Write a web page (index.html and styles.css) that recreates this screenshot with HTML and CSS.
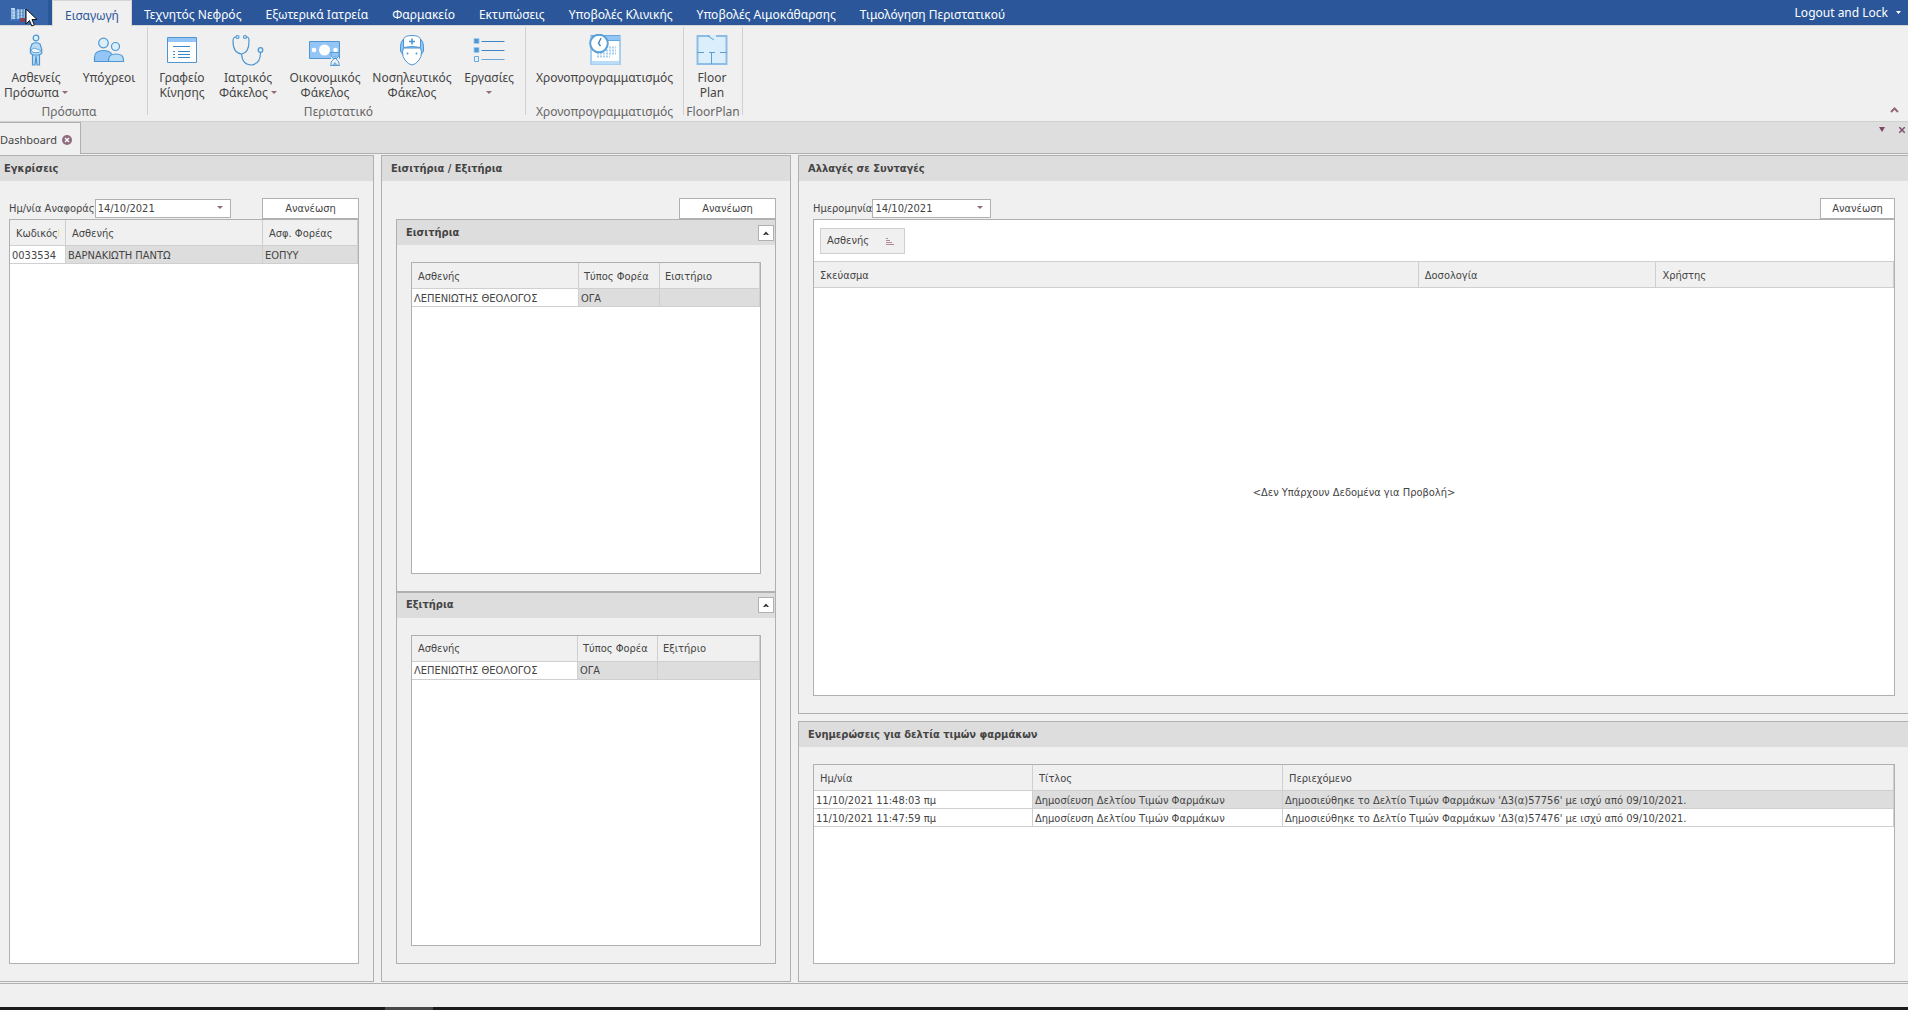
FILE: index.html
```
<!DOCTYPE html>
<html lang="el">
<head>
<meta charset="utf-8">
<title>Dashboard</title>
<link rel="stylesheet" href="styles.css">
</head>
<body>
<div class="app">
  <header class="titlebar">
    <button class="app-button" type="button" aria-label="Μενού εφαρμογής">
      <svg width="20" height="18" viewBox="0 0 20 18">
        <path d="M2 2h4v12H2z" fill="#b9dcf0"/><path d="M6 4h3v10H6z" fill="#5d87c0"/>
        <path d="M8 3h8v10H8z" fill="#8cbbe4"/>
        <path d="M9 5h6M9 8h6M9 11h6" stroke="#dcecf8"/><path d="M11 3v10M14 3v10" stroke="#3763a9"/>
        <path d="M3 3v10M2 5h4M2 8h4M2 11h4" stroke="#7ba9d6"/>
        <path d="M11 12h5v4h-5z" fill="#8a4058"/><path d="M1 14h9" stroke="#3f74bd" stroke-width="2"/>
      </svg>
      <svg class="cursor" width="13" height="20" viewBox="0 0 13 20"><path d="M1 1v15l3.500-3.500 2.300 5.500 2.600-1-2.400-5.500H12z" fill="#fff" stroke="#111"/></svg>
    </button>
    <nav class="tabs">
      <button class="tab tab-active" type="button">Εισαγωγή</button>
      <button class="tab" type="button">Τεχνητός Νεφρός</button>
      <button class="tab" type="button">Εξωτερικά Ιατρεία</button>
      <button class="tab" type="button">Φαρμακείο</button>
      <button class="tab" type="button">Εκτυπώσεις</button>
      <button class="tab" type="button">Υποβολές Κλινικής</button>
      <button class="tab" type="button">Υποβολές Αιμοκάθαρσης</button>
      <button class="tab" type="button">Τιμολόγηση Περιστατικού</button>
    </nav>
    <button class="logout" type="button">Logout and Lock
      <svg width="5" height="3" viewBox="0 0 5 3"><path d="M0 0h5L2.500 3z" fill="#fff"/></svg>
    </button>
  </header>

  <div class="ribbon">
    <section class="rgroup rgroup-people">
      <div class="ritems">
        <button class="ritem w-72" type="button">
          <svg width="32" height="32" viewBox="0 0 32 32" stroke="#4f96d0" stroke-width="1.200" fill="#b8dcf8">
            <path d="M12.500 20v11h2.500l1-9 1 9h2.500V20"/>
            <path d="M12 10q4-2.500 8 0l1.700 5v4.500l-2.500 1.500h-6.500l-2.300-2v-4.500z"/>
            <path d="M11 16l3-2 7 2.500-2 2-6 0z" fill="#f0f8ff" stroke-width=".8"/>
            <circle cx="16" cy="4" r="2.800" fill="#daeefb"/>
          </svg>
          <span>Ασθενείς<br>Πρόσωπα <i class="drop"></i></span>
        </button>
        <button class="ritem w-74" type="button">
          <svg width="32" height="32" viewBox="0 0 32 32" stroke="#4f96d0" stroke-width="1.200">
            <path d="M1.500 27.500v-4q0-7 9-7t9 7v4z" fill="#93c6f7"/>
            <path d="M15.500 27.500v-1.500q0-6 7.500-6t7.500 6v1.500z" fill="#b5dcf9"/>
            <circle cx="10.500" cy="9" r="4.800" fill="#daeefb"/><circle cx="22.500" cy="12.500" r="4" fill="#daeefb"/>
          </svg>
          <span>Υπόχρεοι</span>
        </button>
      </div>
      <div class="rcaption">Πρόσωπα</div>
    </section>
    <section class="rgroup rgroup-case">
      <div class="ritems">
        <button class="ritem w-60" type="button">
          <svg width="32" height="32" viewBox="0 0 32 32">
            <path d="M1.500 3.500h29v25h-29z" fill="#fff" stroke="#4f96d0"/><path d="M2 4h28v4H2z" fill="#93c6f7"/>
            <path d="M7 12.500h17M12 17.500h12M12 20.500h12M12 23.500h12" stroke="#3d86c6"/>
            <path d="M7 17.500h3M7 20.500h3M7 23.500h3" stroke="#3d86c6" stroke-dasharray="2 1"/>
          </svg>
          <span>Γραφείο<br>Κίνησης</span>
        </button>
        <button class="ritem w-72" type="button">
          <svg width="32" height="32" viewBox="0 0 32 32" stroke="#4f96d0" stroke-width="1.200" fill="none">
            <path d="M4 3q-3 0-3 4 0 12 8.500 13Q17 19 17 7q0-4-2-4"/>
            <path d="M9.500 20q1 11 10 11 9-1 9-12.500"/>
            <circle cx="5.500" cy="3" r="1.500" fill="#daeefb"/><circle cx="13" cy="3" r="1.500" fill="#daeefb"/><circle cx="28.500" cy="16" r="2.300" fill="#daeefb"/>
          </svg>
          <span>Ιατρικός<br>Φάκελος <i class="drop"></i></span>
        </button>
        <button class="ritem w-82" type="button">
          <svg width="32" height="32" viewBox="0 0 32 32">
            <path d="M.500 7.500h30v17h-30z" fill="#93c6f7" stroke="#4f96d0"/>
            <circle cx="15.500" cy="16" r="5.500" fill="#fff"/><circle cx="5" cy="16" r="2.300" fill="#fff"/><circle cx="26.500" cy="16" r="2.300" fill="#fff"/>
            <path d="M21 18.500h10M21 31.500h10M22 19v2q0 2 3 4-3 2-3 4v2M30 19v2q0 2-3 4 3 2 3 4v2" fill="#e3f2fd" stroke="#5c9fd3"/>
            <path d="M24 22h4l-2 2zM23 31l3-3 3 3z" fill="#7cb8ec"/>
          </svg>
          <span>Οικονομικός<br>Φάκελος</span>
        </button>
        <button class="ritem w-92" type="button">
          <svg width="32" height="32" viewBox="0 0 32 32" stroke="#4f96d0">
            <path d="M7 5.500Q4.500 8 4.500 13v4l2.500 4h18l2.500-4v-4Q27.500 8 25 5.500z" fill="#93c6f7"/>
            <path d="M7.500 14l-1 4q0 5 2.500 8 3 4.500 7 5 4-.5 7-5 2.500-3 2.500-8l-1-4z" fill="#fff"/>
            <path d="M7.500 13.500V5Q9 1.500 16 1.500T24.500 5v8.500q-8.500-2-17 0z" fill="#fff"/>
            <path d="M13 7.500h6M16 4.500v6" stroke-width="1.600"/>
            <circle cx="11.500" cy="19.500" r="1" fill="#4f96d0" stroke="none"/><circle cx="20.500" cy="19.500" r="1" fill="#4f96d0" stroke="none"/>
          </svg>
          <span>Νοσηλευτικός<br>Φάκελος</span>
        </button>
        <button class="ritem w-62" type="button">
          <svg width="32" height="32" viewBox="0 0 32 32">
            <path d="M1 4.500h5v5H1zM1 13.500h5v5H1z" fill="#4f96d0" stroke="#9ccaf0"/>
            <path d="M1.500 22.500h4v5h-4z" fill="#e6f3fd" stroke="#6aa9dc"/>
            <path d="M8.500 7.500h23M8.500 16.500h23" stroke="#3d86c6"/><path d="M8.500 25.500h23" stroke="#6aa5d8"/>
          </svg>
          <span>Εργασίες<br><i class="drop"></i></span>
        </button>
      </div>
      <div class="rcaption">Περιστατικό</div>
    </section>
    <section class="rgroup rgroup-plan">
      <div class="ritems">
        <button class="ritem w-157" type="button">
          <svg width="32" height="32" viewBox="0 0 32 32">
            <path d="M2 2h29v28H2z" fill="#fff" stroke="#a8cff0" stroke-width="2"/><path d="M2 2h29v4H2z" fill="#93c6f7"/><path d="M2 1.500h29M2 6.500h29" stroke="#68a7dc"/>
            <path d="M3 27h27v3H3z" fill="#b9ddf8"/>
            <path d="M20 13.500h7M17 16.500h10M8 19.500h19M8 22.500h13" stroke="#a8cff0" stroke-width="2" stroke-dasharray="2 1"/>
            <circle cx="10" cy="9.500" r="8.800" fill="#fff" stroke="#5a9fd6" stroke-width="2"/>
            <path d="M12 4L9.500 9.500l2 2.500" fill="none" stroke="#3d7fbd" stroke-width="1.300"/>
          </svg>
          <span>Χρονοπρογραμματισμός</span>
        </button>
      </div>
      <div class="rcaption">Χρονοπρογραμματισμός</div>
    </section>
    <section class="rgroup rgroup-floor">
      <div class="ritems">
        <button class="ritem w-56" type="button">
          <svg width="32" height="32" viewBox="0 0 32 32">
            <path d="M1.500 2h29v28h-29z" fill="#daeefb" stroke="#8dbde6" stroke-width="2"/>
            <path d="M1 18.500h7M13 18.500h6M24 18.500h7M15.500 18.500V30M12 2l6 4" stroke="#5a9fd6"/><path d="M14 2h6" stroke="#daeefb" stroke-width="2"/>
          </svg>
          <span>Floor<br>Plan</span>
        </button>
      </div>
      <div class="rcaption">FloorPlan</div>
    </section>
    <button class="ribbon-toggle" type="button" aria-label="Σύμπτυξη κορδέλας">
      <svg width="9" height="6" viewBox="0 0 9 6"><path d="M1 5l3.500-3.500L8 5" fill="none" stroke="#94687c" stroke-width="2"/></svg>
    </button>
  </div>

  <div class="docbar">
    <div class="doctab">Dashboard
      <button class="close" type="button" aria-label="Κλείσιμο">
        <svg width="10" height="10" viewBox="0 0 10 10"><circle cx="5" cy="5" r="5" fill="#8f6b80"/><path d="M3 3l4 4M7 3L3 7" stroke="#fff" stroke-width="1.500"/></svg>
      </button>
    </div>
    <div class="docfill">
      <button class="close" type="button" aria-label="Λίστα">
        <svg width="6" height="5" viewBox="0 0 6 5"><path d="M0 0h6L3 5z" fill="#80456b"/></svg>
      </button>
      <button class="close" type="button" aria-label="Κλείσιμο όλων">
        <svg width="6" height="6" viewBox="0 0 6 6"><path d="M0 0l6 6M6 0L0 6" stroke="#80506c" stroke-width="1.500"/></svg>
      </button>
    </div>
  </div>

  <main class="board">
    <section class="panel panel-first">
      <h2 class="phead">Εγκρίσεις</h2>
      <div class="pbody">
        <div class="form">
          <label for="d1">Ημ/νία Αναφοράς</label>
          <span class="date date-wide"><input id="d1" type="text" value="14/10/2021"><button type="button" aria-label="Ημερολόγιο"><i class="drop"></i></button></span>
          <button class="refresh" type="button">Ανανέωση</button>
        </div>
        <div class="gridbox">
          <table>
            <colgroup><col class="c56"><col class="c197"><col></colgroup>
            <thead><tr><th class="sorted">Κωδικός</th><th>Ασθενής</th><th>Ασφ. Φορέας</th></tr></thead>
            <tbody><tr class="sel"><td>0033534</td><td>ΒΑΡΝΑΚΙΩΤΗ ΠΑΝΤΩ</td><td>ΕΟΠΥΥ</td></tr></tbody>
          </table>
        </div>
      </div>
    </section>

    <section class="panel">
      <h2 class="phead">Εισιτήρια / Εξιτήρια</h2>
      <div class="pbody">
        <div class="form"><button class="refresh" type="button">Ανανέωση</button></div>
        <section class="sub">
          <h3 class="phead">Εισιτήρια
            <button class="fold" type="button" aria-label="Σύμπτυξη"><svg width="6" height="4" viewBox="0 0 6 4"><path d="M0 4l3-3.500L6 4H4L3 3 2 4z" fill="#333"/></svg></button></h3>
          <div class="pbody">
            <div class="gridbox">
              <table>
                <colgroup><col class="c167"><col class="c81"><col></colgroup>
                <thead><tr><th>Ασθενής</th><th class="near">Τύπος Φορέα</th><th class="near">Εισιτήριο</th></tr></thead>
                <tbody><tr class="sel"><td>ΛΕΠΕΝΙΩΤΗΣ ΘΕΟΛΟΓΟΣ</td><td>ΟΓΑ</td><td></td></tr></tbody>
              </table>
            </div>
          </div>
        </section>
        <section class="sub">
          <h3 class="phead">Εξιτήρια
            <button class="fold" type="button" aria-label="Σύμπτυξη"><svg width="6" height="4" viewBox="0 0 6 4"><path d="M0 4l3-3.500L6 4H4L3 3 2 4z" fill="#333"/></svg></button></h3>
          <div class="pbody">
            <div class="gridbox">
              <table>
                <colgroup><col class="c166"><col class="c80"><col></colgroup>
                <thead><tr><th>Ασθενής</th><th class="near">Τύπος Φορέα</th><th class="near">Εξιτήριο</th></tr></thead>
                <tbody><tr class="sel"><td>ΛΕΠΕΝΙΩΤΗΣ ΘΕΟΛΟΓΟΣ</td><td>ΟΓΑ</td><td></td></tr></tbody>
              </table>
            </div>
          </div>
        </section>
      </div>
    </section>

    <div class="stack">
      <section class="panel panel-last">
        <h2 class="phead">Αλλαγές σε Συνταγές</h2>
        <div class="pbody">
          <div class="form">
            <label for="d2">Ημερομηνία</label>
            <span class="date"><input id="d2" type="text" value="14/10/2021"><button type="button" aria-label="Ημερολόγιο"><i class="drop"></i></button></span>
            <button class="refresh refresh-small" type="button">Ανανέωση</button>
          </div>
          <div class="gridbox">
            <div class="groupby">
              <button class="chip" type="button">Ασθενής
                <svg width="8" height="7" viewBox="0 0 8 7"><path d="M0 .500h2M0 2.500h4M0 4.500h6M0 6.500h8" stroke="#b08a9a"/></svg>
              </button>
            </div>
            <table>
              <colgroup><col class="p56"><col class="p22"><col class="p22"></colgroup>
              <thead><tr><th>Σκεύασμα</th><th>Δοσολογία</th><th>Χρήστης</th></tr></thead>
            </table>
            <p class="empty">&lt;Δεν Υπάρχουν Δεδομένα για Προβολή&gt;</p>
          </div>
        </div>
      </section>
      <section class="panel panel-last">
        <h2 class="phead">Ενημερώσεις για δελτία τιμών φαρμάκων</h2>
        <div class="pbody">
          <div class="gridbox">
            <table>
              <colgroup><col class="c219"><col class="c250"><col></colgroup>
              <thead><tr><th>Ημ/νία</th><th>Τίτλος</th><th>Περιεχόμενο</th></tr></thead>
              <tbody>
                <tr class="sel"><td>11/10/2021 11:48:03 πμ</td><td>Δημοσίευση Δελτίου Τιμών Φαρμάκων</td><td>Δημοσιεύθηκε το Δελτίο Τιμών Φαρμάκων 'Δ3(α)57756' με ισχύ από 09/10/2021.</td></tr>
                <tr><td>11/10/2021 11:47:59 πμ</td><td>Δημοσίευση Δελτίου Τιμών Φαρμάκων</td><td>Δημοσιεύθηκε το Δελτίο Τιμών Φαρμάκων 'Δ3(α)57476' με ισχύ από 09/10/2021.</td></tr>
              </tbody>
            </table>
          </div>
        </div>
      </section>
    </div>
  </main>

  <footer class="statusbar"></footer>
  <div class="taskbar"><span></span></div>
</div>
</body>
</html>
```
FILE: styles.css
```
* { box-sizing: border-box; }

body {
  margin: 0;
  background: #f0f0f0;
  color: #444;
  font: 11px/14px "DejaVu Sans Condensed", "DejaVu Sans", sans-serif;
}

button, input { font: inherit; color: inherit; margin: 0; padding: 0; border: 0; background: none; }
svg { display: block; flex: none; }
h2, h3, p { margin: 0; font-size: inherit; }

.app { display: flex; flex-direction: column; min-height: 100vh; }

.titlebar, .ribbon { font: 12px/15px "Noto Sans", "Open Sans", sans-serif; }

/* title bar with the ribbon tabs */
.titlebar { display: flex; height: 25px; background: #2b579a; color: #fff; }
.app-button { position: relative; width: 48px; padding: 4px 0 0 9px; background: #3763a9; }
.cursor { position: absolute; left: 25px; top: 8px; }
.tabs { display: flex; flex: 1; margin-left: 4px; white-space: nowrap; }
.tab { padding: 4px 12px 0; }
.tab-active { z-index: 1; height: 26px; background: #f0f0f0; color: #2b579a; border: 1px solid #d5d5d5; border-bottom: 0; }
.logout { display: flex; align-items: center; gap: 8px; padding: 0 7px; }

.drop { display: inline-block; border: solid transparent; border-width: 3px 3px 0; border-top-color: #94687c; vertical-align: 3px; }

/* ribbon */
.ribbon { display: flex; height: 97px; padding-top: 1px; border-top: 1px solid #d5d5d5; border-bottom: 1px solid #d0d0d0; white-space: nowrap; }
.rgroup { display: flex; flex-direction: column; height: 88px; border-right: 1px solid #d0d0d0; }
.ritems { display: flex; flex: 1; }
.ritem { display: flex; flex-direction: column; align-items: center; gap: 4px; padding-top: 7px; }
.rcaption { height: 11px; text-align: center; color: #666; line-height: 15px; }
.rgroup-people { width: 148px; }
.rgroup-people .rcaption { padding-right: 9px; }
.rgroup-case { width: 378px; padding-left: 4px; }
.rgroup-plan { width: 158px; }
.rgroup-floor { width: 59px; }
.w-56 { width: 56px; }
.w-60 { width: 60px; }
.w-62 { width: 62px; }
.w-72 { width: 72px; }
.w-74 { width: 74px; }
.w-82 { width: 82px; }
.w-92 { width: 92px; }
.w-157 { width: 157px; }
.ribbon-toggle { align-self: flex-end; margin: 0 9px 8px auto; }

/* document tabs */
.docbar { display: flex; height: 32px; }
.doctab { display: flex; align-items: center; justify-content: space-between; width: 81px; padding: 2px 8px 0 0; border: 1px solid #b0b0b0; border-width: 1px 1px 0 0; font: 11px/15px "Noto Sans", "Open Sans", sans-serif; }
.docfill { display: flex; flex: 1; justify-content: flex-end; align-items: flex-start; gap: 14px; padding: 5px 3px 0 0; background: #dddedd; border-bottom: 1px solid #b0b0b0; }

/* dashboard */
.board { display: grid; grid-template-columns: 374px 410px 1fr; gap: 7px; flex: 1; padding: 1px 0; }
.stack { display: grid; grid-template-rows: 559fr 261fr; gap: 7px; }
.panel, .sub { display: flex; flex-direction: column; border: 1px solid #b0b0b0; }
.panel-first { border-left: 0; }
.panel-last { border-right: 0; }
.sub { flex: 1; }
.phead { display: flex; align-items: center; justify-content: space-between; height: 25px; padding: 0 1px 0 9px; background: #ddd; font-weight: bold; }
.panel-first .phead { padding-left: 4px; }
.fold { display: grid; place-items: center; width: 16px; height: 16px; border: 1px solid #b0b0b0; background: #fff; }
.pbody { display: flex; flex-direction: column; flex: 1; padding: 17px 14px; }
.panel-first .pbody { padding-left: 9px; }
.panel-last .pbody { padding-right: 13px; }

.form { display: flex; align-items: center; height: 21px; white-space: nowrap; }
.date { display: flex; width: 119px; height: 19px; padding: 0 7px 0 2px; border: 1px solid #b0b0b0; background: #fff; }
.date-wide { width: 136px; }
.date input { flex: 1; min-width: 0; }
.refresh { width: 97px; height: 21px; margin-left: auto; border: 1px solid #b0b0b0; background: #fff; }
.refresh-small { width: 75px; }

/* data grids */
.gridbox { display: flex; flex-direction: column; flex: 1; border: 1px solid #b0b0b0; background: #fff; }
table { width: 100%; table-layout: fixed; border-collapse: separate; border-spacing: 0; white-space: nowrap; }
th, td { overflow: hidden; border: solid #cfcfcf; border-width: 0 1px 1px 0; text-align: left; }
th { height: 26px; padding: 2px 0 0 6px; background: #f0f0f0; font-weight: normal; }
th.near { padding-left: 5px; }
th.sorted { background: linear-gradient(#f5d9a0, #f5d9a0) 48px 9px / 1px 8px no-repeat #f0f0f0; }
td { height: 18px; padding: 2px 0 0 2px; }
.sel td + td { background: #ddd; }
.c56 { width: 56px; }
.c80 { width: 80px; }
.c81 { width: 81px; }
.c166 { width: 166px; }
.c167 { width: 167px; }
.c197 { width: 197px; }
.c219 { width: 219px; }
.c250 { width: 250px; }
.p56 { width: 56%; }
.p22 { width: 22%; }
.groupby { padding: 8px 6px 7px; border-bottom: 1px solid #cfcfcf; }
.chip { display: flex; align-items: center; justify-content: space-between; width: 85px; height: 26px; padding: 0 10px 0 6px; border: 1px solid #cfcfcf; background: #f0f0f0; }
.empty { display: grid; place-items: center; flex: 1; padding-top: 2px; }

.statusbar { height: 24px; border-top: 1px solid #b0b0b0; }
.taskbar { display: flex; height: 3px; background: #1c1c1e; }
.taskbar span { width: 48px; margin-left: 385px; background: #4a484a; }
```
